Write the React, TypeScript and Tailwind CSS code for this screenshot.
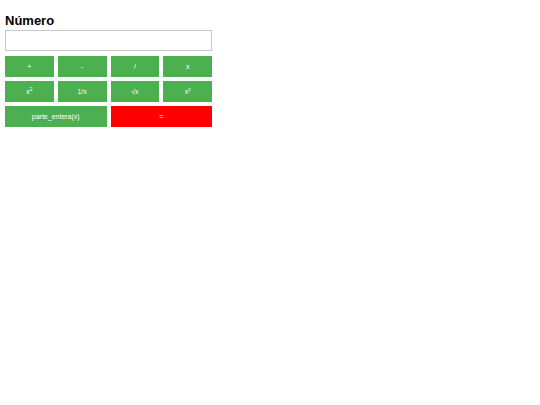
const btn = "h-[21px] bg-[#4caf50] text-white text-[7px] leading-none flex items-center justify-center"

export default function App() {
  return (
    <main className="min-h-screen bg-white pl-[5px] pt-[13px] font-['Liberation_Sans',Arial,sans-serif]">
      <h2 className="font-bold text-[13px] leading-[16px] text-black">Número</h2>
      <input
        type="text"
        className="mt-[1px] block w-[207px] h-[21px] border border-[#c8c8c8] bg-white outline-none"
      />
      <div className="mt-[5px] grid w-[207px] grid-cols-4 gap-[4px]">
        <button className={btn}>+</button>
        <button className={btn}>-</button>
        <button className={btn}>/</button>
        <button className={btn}>x</button>
        <button className={btn}>
          x<sup className="text-[5px]">2</sup>
        </button>
        <button className={btn}>1/x</button>
        <button className={btn}>√x</button>
        <button className={btn}>
          x<sup className="text-[5px]">y</sup>
        </button>
        <button className={`${btn} col-span-2`}>parte_entera(x)</button>
        <button className="col-span-2 h-[21px] bg-[#ff0000] text-white text-[7px] leading-none flex items-center justify-center">
          =
        </button>
      </div>
    </main>
  )
}
